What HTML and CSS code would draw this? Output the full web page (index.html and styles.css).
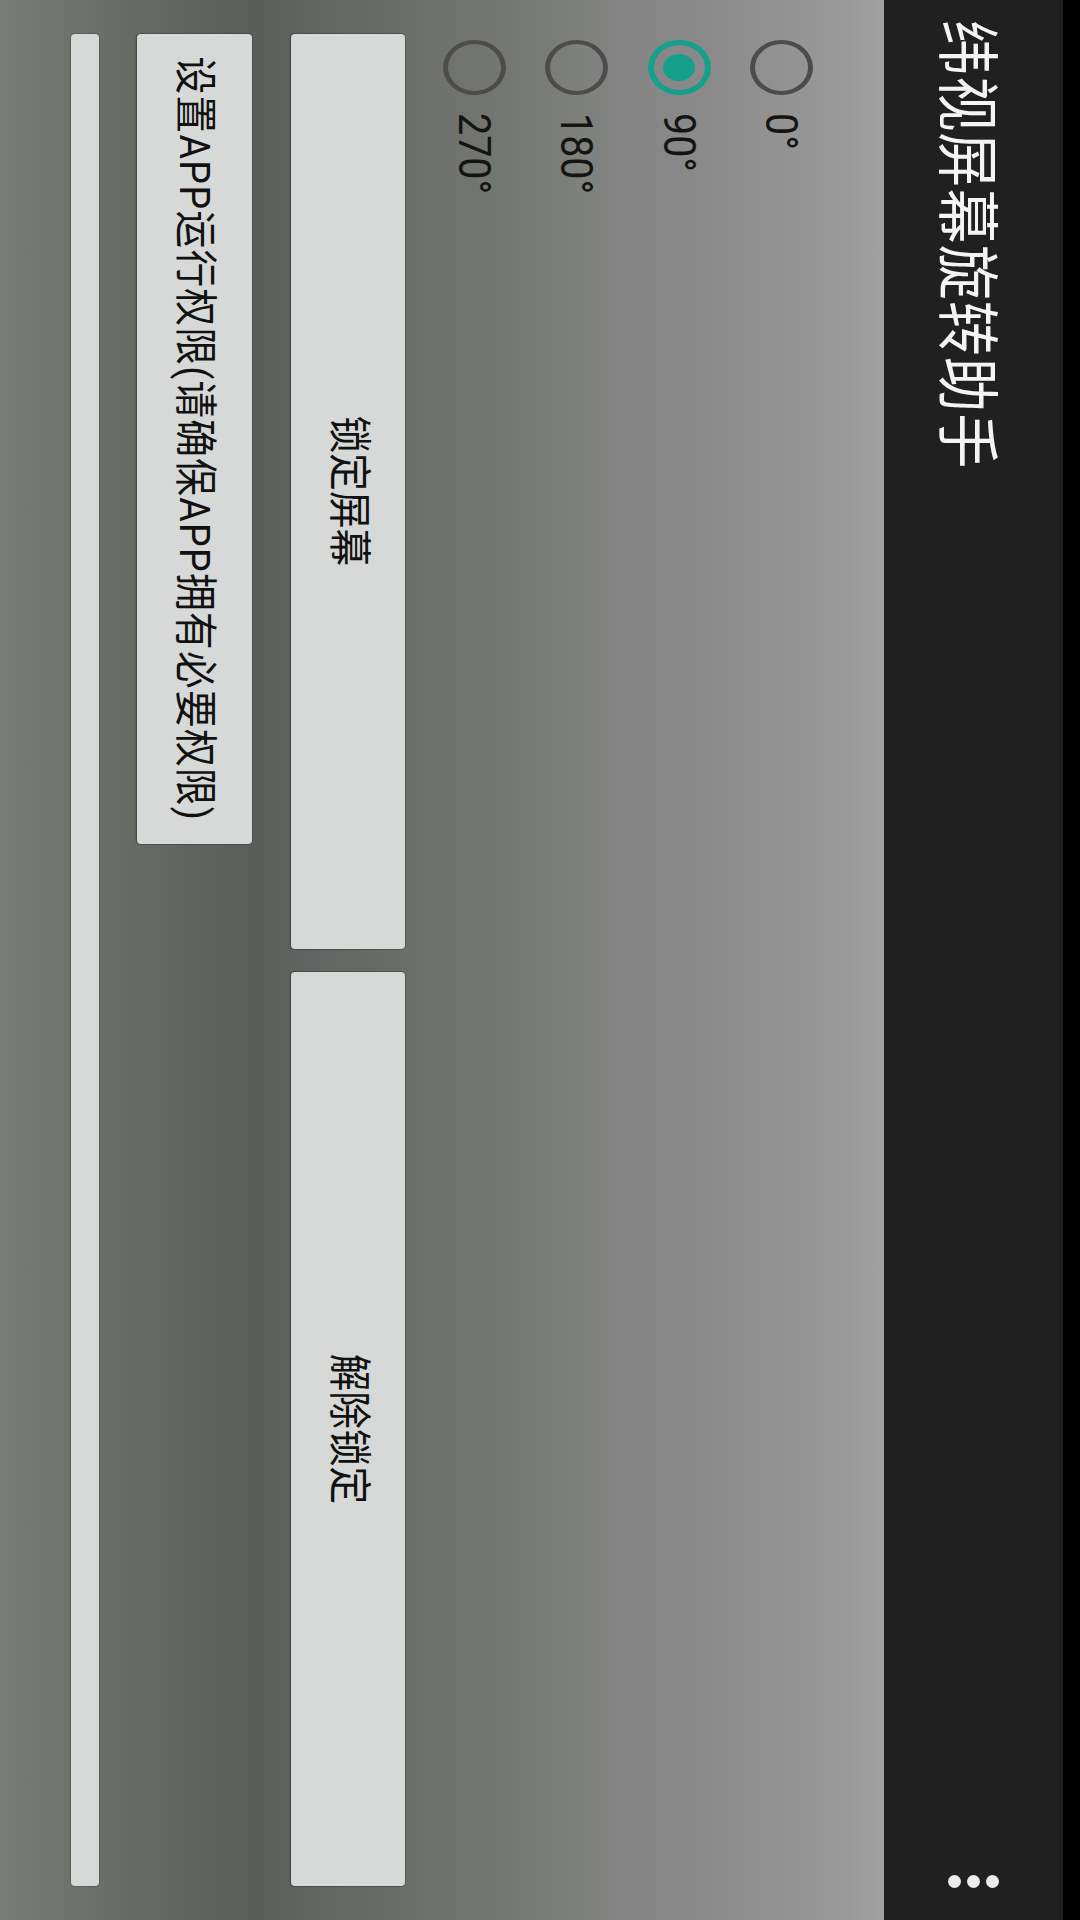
FILE: index.html
```html
<!DOCTYPE html>
<html lang="zh-CN">
<head>
<meta charset="utf-8">
<title>纬视屏幕旋转助手</title>
<link rel="stylesheet" href="styles.css">
</head>
<body>
<div class="screen">
  <div class="statusbar"></div>
  <header class="appbar">
    <h1 class="title"><span class="sq">纬视屏幕旋转助手</span></h1>
    <div class="overflow" aria-label="更多选项">
      <span class="dot"></span>
      <span class="dot"></span>
      <span class="dot"></span>
    </div>
  </header>
  <main class="content">
    <div class="radios">
      <div class="radio-item"><span class="radio"></span><span class="radio-label sq">0°</span></div>
      <div class="radio-item"><span class="radio checked"></span><span class="radio-label sq">90°</span></div>
      <div class="radio-item"><span class="radio"></span><span class="radio-label sq">180°</span></div>
      <div class="radio-item"><span class="radio"></span><span class="radio-label sq">270°</span></div>
    </div>
    <div class="btn-row">
      <div class="btn btn-half" role="button"><span class="btn-text">锁定屏幕</span></div>
      <div class="btn btn-half" role="button"><span class="btn-text">解除锁定</span></div>
    </div>
    <div class="perm-row">
      <div class="btn btn-perm" role="button"><span class="btn-text perm-text">设置APP运行权限(请确保APP拥有必要权限)</span></div>
    </div>
    <div class="bar"></div>
  </main>
</div>
</body>
</html>
```

FILE: styles.css
```css
html, body {
  margin: 0;
  padding: 0;
  width: 1080px;
  height: 1920px;
  overflow: hidden;
  background: #000;
}

/* The app is shown rotated: landscape UI on a portrait screen.
   Vertical writing mode with sideways glyphs lays it out naturally. */
.screen {
  writing-mode: vertical-rl;
  text-orientation: sideways;
  width: 1080px;
  height: 1920px;
  display: flex;
  flex-direction: column;
  font-family: Roboto, "Noto Sans CJK SC", sans-serif;
}

/* glyphs in the source capture are slightly squashed along the reading axis */
.sq {
  display: inline-block;
  transform: scaleY(0.875);
  transform-origin: top center;
}

.statusbar {
  flex: 0 0 17px;
  background: #000;
}

.appbar {
  flex: 0 0 179px;
  background: #202020;
  display: flex;
  align-items: center;
  justify-content: space-between;
  padding: 20px 0 32px 0;
  box-sizing: border-box;
}

.title {
  margin: 0;
  font-family: "Noto Sans CJK SC", sans-serif;
  font-weight: 400;
  font-size: 63px;
  letter-spacing: 1.2px;
  line-height: 1;
  color: #f4f4f4;
  margin-right: 2px;
}

.overflow {
  display: flex;
  flex-direction: column;
  gap: 6px;
}

.dot {
  width: 13px;
  height: 13px;
  border-radius: 50%;
  background: #ececec;
}

.content {
  flex: 1;
  display: flex;
  flex-direction: column;
  padding: 34px 51px 34px 0;
  box-sizing: border-box;
  background: linear-gradient(to right,
    #787b76 0px,
    #70736e 60px,
    #686b66 120px,
    #60625f 200px,
    #5b5d5a 255px,
    #60635f 300px,
    #6a6d68 400px,
    #6f726d 450px,
    #747771 500px,
    #7b7e78 560px,
    #838483 620px,
    #8a8a8a 700px,
    #929292 780px,
    #9a9a9a 850px,
    #a2a2a2 884px);
}

.radios {
  display: flex;
  flex-direction: column;
  align-items: flex-start;
}

.radio-item {
  flex: 0 0 102.5px;
  display: flex;
  align-items: center;
  gap: 18px;
  padding-top: 5.5px;
}

.radio {
  width: 63px;
  height: 55px;
  box-sizing: border-box;
  border-radius: 50%;
  border-style: solid;
  border-color: #4c4c4c;
  border-width: 4.8px 5.5px;
  display: flex;
  align-items: center;
  justify-content: center;
}

.radio.checked {
  border-color: #14a08a;
  border-width: 5.3px 6px;
}

.radio.checked::after {
  content: "";
  width: 32px;
  height: 27px;
  border-radius: 50%;
  background: #14a08a;
}

.radio-label {
  font-family: Roboto, sans-serif;
  font-size: 45px;
  color: #141414;
  line-height: 1;
}

.btn {
  background: #d6d9d7;
  border-radius: 4px;
  box-shadow: 0 0 0 1px rgba(50, 52, 50, 0.35), -1px 0 2px rgba(0, 0, 0, 0.25);
  display: flex;
  align-items: center;
  justify-content: center;
  box-sizing: border-box;
}

.btn-text {
  display: inline-block;
  font-family: Roboto, "Noto Sans CJK SC", sans-serif;
  font-size: 43px;
  line-height: 1;
  color: #111;
  white-space: nowrap;
  transform: scaleY(0.875);
  transform-origin: center;
}

.btn-row {
  flex: 0 0 114px;
  display: flex;
  gap: 23px;
  margin-right: 18px;
}

.btn-half {
  flex: 1;
}

.perm-row {
  flex: 0 0 115px;
  display: flex;
  margin-right: 39px;
}

.btn-perm {
  padding: 22px 0;
}

.perm-text {
  letter-spacing: 1.5px;
  margin: -54px 0;
}

.bar {
  flex: 0 0 28px;
  margin-right: 38px;
  border-radius: 4px;
  background: #d6d9d7;
  box-shadow: 0 0 0 1px rgba(50, 52, 50, 0.3);
}
```
